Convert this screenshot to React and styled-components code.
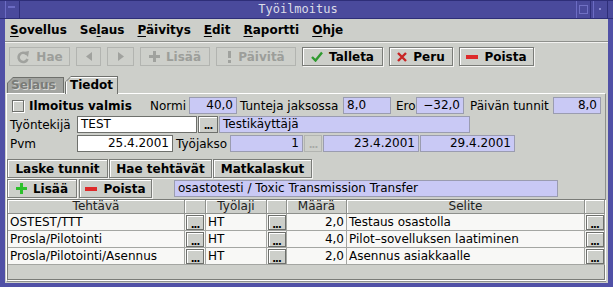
import React from 'react';
import styled, { createGlobalStyle } from 'styled-components';

const GlobalStyle = createGlobalStyle`
  html, body {
    margin: 0;
    padding: 0;
    background: #4c4ca0;
  }
  body {
    font-family: "DejaVu Sans", "Liberation Sans", sans-serif;
    font-size: 12px;
    color: #000;
  }
`;

const GRAY = '#cdcfca';
const LAVENDER = '#c9c9f5';

const Window = styled.div`
  width: 613px;
  height: 287px;
  box-sizing: border-box;
  background: #5050a6;
  display: flex;
  flex-direction: column;
  padding: 0 5px 4px 5px;
  overflow: hidden;
`;

const TitleBar = styled.div`
  height: 19px;
  margin: 0 -5px;
  box-sizing: border-box;
  background: #4a4a9c;
  border-top: 1px solid #2e2e78;
  border-bottom: 1px solid #2e2e78;
  display: flex;
  align-items: stretch;
  position: relative;
`;

const TitleText = styled.div`
  flex: 1;
  text-align: center;
  font-family: "DejaVu Sans Mono", "Liberation Mono", monospace;
  font-size: 12px;
  line-height: 17px;
  color: #dcdce8;
`;

const TitleBox = styled.div`
  width: 15px;
  margin-left: ${(p) => p.ml || 0}px;
  box-sizing: border-box;
  border-left: 1px solid #6c6cc4;
  border-right: 1px solid #2e2e78;
  display: flex;
  align-items: center;
  justify-content: center;
`;

const Body = styled.div`
  flex: 1;
  background: ${GRAY};
  display: flex;
  flex-direction: column;
  min-height: 0;
`;

const MenuBar = styled.div`
  height: 22px;
  display: flex;
  align-items: center;
  gap: 13px;
  padding-left: 5px;
  border-bottom: 1px solid #8e908c;
  box-shadow: 0 1px 0 #f2f2f0;
  font-weight: bold;
`;

const MenuItem = styled.span`
  line-height: 22px;
  u { text-decoration: underline; text-underline-offset: 2px; }
`;

const ToolBar = styled.div`
  display: flex;
  gap: 6px;
  padding: 5px 0 10px 4px;
`;

const Button = styled.div`
  width: ${(p) => p.w}px;
  height: ${(p) => p.h || 19}px;
  box-sizing: border-box;
  display: flex;
  align-items: center;
  justify-content: center;
  gap: 6px;
  font-weight: bold;
  font-size: 12px;
  background: ${GRAY};
  color: ${(p) => (p.disabled ? '#9c9e9a' : '#000')};
  border: 1px solid ${(p) => (p.disabled ? '#b2b4b0' : '#7a7c78')};
  box-shadow: ${(p) =>
    p.disabled ? 'none' : 'inset 1px 1px 0 #ffffff, 1px 1px 0 #f4f4f2'};
  white-space: nowrap;
`;

const TabRow = styled.div`
  display: flex;
  align-items: flex-end;
  height: 17px;
  padding-left: 2px;
  position: relative;
  z-index: 1;
`;

const TabOuter = styled.div`
  width: ${(p) => p.w}px;
  height: ${(p) => (p.selected ? 18 : 16)}px;
  margin-left: ${(p) => p.ml || 0}px;
  margin-bottom: ${(p) => (p.selected ? -1 : 0)}px;
  background: #6e706c;
  clip-path: polygon(6px 0, 100% 0, 100% 100%, 0 100%, 0 6px);
  padding: 1px 1px 0 1px;
  box-sizing: border-box;
`;

const TabInner = styled.div`
  height: 100%;
  background: ${(p) => (p.selected ? GRAY : '#a3a5a1')};
  clip-path: polygon(5px 0, 100% 0, 100% 100%, 0 100%, 0 5px);
  box-shadow: ${(p) => (p.selected ? 'inset 1px 1px 0 #fff' : 'none')};
  font-weight: bold;
  line-height: ${(p) => (p.selected ? 17 : 15)}px;
  padding-left: ${(p) => (p.selected ? 4 : 3)}px;
  color: ${(p) => (p.selected ? '#000' : '#7a7c78')};
  text-shadow: ${(p) => (p.selected ? 'none' : '1px 1px 0 #d8d8d6')};
`;

const Panel = styled.div`
  flex: 1;
  margin: 0 2px 1px 1px;
  border-top: 1px solid #fff;
  border-left: 1px solid #fff;
  border-right: 1px solid #8e908c;
  border-bottom: 1px solid #8e908c;
  padding-top: 3px;
  display: flex;
  flex-direction: column;
  min-height: 0;
`;

const FormRow = styled.div`
  display: flex;
  align-items: center;
  height: 17px;
  padding-left: 3px;
  margin-top: ${(p) => p.mt || 0}px;
  gap: ${(p) => p.gap || 0}px;
`;

const Label = styled.span`
  width: ${(p) => p.w}px;
  margin-left: ${(p) => p.ml || 0}px;
  flex-shrink: 0;
  white-space: nowrap;
  font-weight: ${(p) => (p.bold ? 'bold' : 'normal')};
`;

const Field = styled.div`
  width: ${(p) => p.w}px;
  height: 17px;
  flex-shrink: 0;
  box-sizing: border-box;
  margin-left: ${(p) => p.ml || 0}px;
  background: ${(p) => (p.white ? '#ffffff' : LAVENDER)};
  border: 1px solid ${(p) => (p.white ? '#6e706c' : '#9a9cb0')};
  padding: 0 3px;
  line-height: 15px;
  text-align: ${(p) => (p.right ? 'right' : 'left')};
  white-space: nowrap;
  overflow: hidden;
`;

const Check = styled.div`
  width: 12px;
  height: 12px;
  margin-left: 2px;
  box-sizing: border-box;
  border: 1px solid #6e706c;
  box-shadow: inset 1px 1px 0 #fff, 1px 1px 0 #fff;
  flex-shrink: 0;
`;

const DotButton = styled.div`
  width: ${(p) => p.w || 18}px;
  height: ${(p) => p.h || 16}px;
  flex-shrink: 0;
  box-sizing: border-box;
  border: 1px solid ${(p) => (p.disabled ? '#b2b4b0' : '#6e706c')};
  box-shadow: ${(p) => (p.disabled ? 'none' : 'inset 1px 1px 0 #fff')};
  background: ${GRAY};
  color: ${(p) => (p.disabled ? '#a8aaa6' : '#000')};
  font-weight: bold;
  font-size: 10px;
  letter-spacing: -1px;
  text-align: center;
  line-height: 17px;
`;

const ButtonRow = styled.div`
  display: flex;
  align-items: center;
  gap: ${(p) => p.gap || 1}px;
  margin-top: ${(p) => p.mt || 0}px;
`;

const Table = styled.div`
  flex: 1;
  width: 598px;
  margin-top: 1px;
  margin-bottom: 1px;
  box-sizing: border-box;
  border: 1px solid #7a7c78;
  box-shadow: 1px 1px 0 #fff;
  display: grid;
  grid-template-columns: 177px 21px 61px 20px 60px 238px 20px;
  grid-auto-rows: 17px;
  grid-template-rows: 14px;
  align-content: start;
`;

const HeadCell = styled.div`
  box-sizing: border-box;
  border-right: 1px solid #8e908c;
  border-bottom: 1px solid #8e908c;
  box-shadow: inset 1px 1px 0 #fff;
  text-align: center;
  line-height: 13px;
  color: #222;
  white-space: nowrap;
  overflow: hidden;
`;

const Cell = styled.div`
  box-sizing: border-box;
  background: #f8f8f6;
  border-right: 1px solid #a4a6a2;
  border-bottom: 1px solid #a4a6a2;
  padding: 0 2px;
  line-height: 16px;
  text-align: ${(p) => (p.right ? 'right' : 'left')};
  white-space: nowrap;
  overflow: hidden;
  display: flex;
  align-items: center;
  justify-content: ${(p) => (p.center ? 'center' : p.right ? 'flex-end' : 'flex-start')};
`;

const RefreshIcon = ({ color }) => (
  <svg width="14" height="14" viewBox="0 0 14 14">
    <path d="M10.5 4.2 A4.6 4.6 0 1 0 11.5 9" fill="none" stroke={color} strokeWidth="2.6" />
    <polygon points="7.5,2 13,1 12,7" fill={color} />
  </svg>
);

const Arrow = ({ dir, color }) => (
  <svg width="6" height="9" viewBox="0 0 6 9">
    {dir === 'left'
      ? <polygon points="6,0 6,9 0,4.5" fill={color} />
      : <polygon points="0,0 0,9 6,4.5" fill={color} />}
  </svg>
);

const PlusIcon = ({ color }) => (
  <svg width="11" height="11" viewBox="0 0 11 11">
    <rect x="4" y="0" width="3" height="11" fill={color} />
    <rect x="0" y="4" width="11" height="3" fill={color} />
  </svg>
);

const BangIcon = ({ color }) => (
  <svg width="5" height="12" viewBox="0 0 5 12">
    <rect x="1" y="0" width="3" height="7" fill={color} />
    <rect x="1" y="9" width="3" height="3" fill={color} />
  </svg>
);

const CheckIcon = () => (
  <svg width="12" height="11" viewBox="0 0 12 11">
    <path d="M1 6 L4.5 9.5 L11 1.5" fill="none" stroke="#2f9a2f" strokeWidth="2.4" />
  </svg>
);

const CrossIcon = () => (
  <svg width="10" height="10" viewBox="0 0 10 10">
    <path d="M1 1 L9 9 M9 1 L1 9" stroke="#c82424" strokeWidth="2.4" />
  </svg>
);

const MinusIcon = () => (
  <svg width="12" height="4" viewBox="0 0 12 4">
    <rect x="0" y="0" width="12" height="4" fill="#de2a2a" />
  </svg>
);

const rows = [
  { task: 'OSTEST/TTT', type: 'HT', amount: '2,0', desc: 'Testaus osastolla' },
  { task: 'Prosla/Pilotointi', type: 'HT', amount: '4,0', desc: 'Pilot\u2013sovelluksen laatiminen' },
  { task: 'Prosla/Pilotointi/Asennus', type: 'HT', amount: '2,0', desc: 'Asennus asiakkaalle' },
];

const DIS = '#a0a29e';

export default function App() {
  return (
    <>
      <GlobalStyle />
      <Window>
        <TitleBar>
          <TitleBox ml={5}>
            <svg width="9" height="9" viewBox="0 0 9 9">
              <rect x="0" y="1" width="7" height="2" fill="#6c6cc4" />
            </svg>
          </TitleBox>
          <TitleText>Työilmoitus</TitleText>
          <TitleBox>
            <svg width="9" height="9" viewBox="0 0 9 9">
              <rect x="0.5" y="0.5" width="8" height="8" fill="none" stroke="#7070c4" />
            </svg>
          </TitleBox>
          <TitleBox ml={2}>
            <svg width="3" height="3" viewBox="0 0 3 3">
              <rect x="0" y="0" width="2" height="2" fill="#8a8ad0" />
            </svg>
          </TitleBox>
          <div style={{ width: 5 }} />
        </TitleBar>
        <Body>
          <MenuBar>
            <MenuItem><u>S</u>ovellus</MenuItem>
            <MenuItem>Se<u>l</u>aus</MenuItem>
            <MenuItem><u>P</u>äivitys</MenuItem>
            <MenuItem><u>E</u>dit</MenuItem>
            <MenuItem><u>R</u>aportti</MenuItem>
            <MenuItem><u>O</u>hje</MenuItem>
          </MenuBar>
          <ToolBar>
            <Button w={61} disabled><RefreshIcon color={DIS} />Hae</Button>
            <Button w={25} disabled><Arrow dir="left" color={DIS} /></Button>
            <Button w={27} disabled><Arrow dir="right" color={DIS} /></Button>
            <Button w={70} disabled><PlusIcon color={DIS} />Lisää</Button>
            <Button w={80} disabled><BangIcon color={DIS} />Päivitä</Button>
            <Button w={81}><CheckIcon />Talleta</Button>
            <Button w={64}><CrossIcon />Peru</Button>
            <Button w={75}><MinusIcon />Poista</Button>
          </ToolBar>
          <TabRow>
            <TabOuter w={57}>
              <TabInner>Selaus</TabInner>
            </TabOuter>
            <TabOuter w={53} ml={1} selected>
              <TabInner selected>Tiedot</TabInner>
            </TabOuter>
          </TabRow>
          <Panel>
            <FormRow>
              <Check />
              <Label w={121} ml={5} bold>Ilmoitus valmis</Label>
              <Label w={39}>Normi</Label>
              <Field w={48} right>40,0</Field>
              <Label w={103} ml={3}>Tunteja jaksossa</Label>
              <Field w={48}>8,0</Field>
              <Label w={20} ml={5}>Ero</Label>
              <Field w={48} right>−32,0</Field>
              <Label w={83} ml={6}>Päivän tunnit</Label>
              <Field w={48} right>8,0</Field>
            </FormRow>
            <FormRow mt={2} gap={1}>
              <Label w={66}>Työntekijä</Label>
              <Field w={120} white>TEST</Field>
              <DotButton w={20} h={17}>...</DotButton>
              <Field w={251}>Testikäyttäjä</Field>
            </FormRow>
            <FormRow mt={2}>
              <Label w={67}>Pvm</Label>
              <Field w={96} white right>25.4.2001</Field>
              <Label w={54} ml={3}>Työjakso</Label>
              <Field w={73} right>1</Field>
              <DotButton w={18} h={17} disabled style={{ marginLeft: 1 }}>...</DotButton>
              <Field w={96} ml={1} right>23.4.2001</Field>
              <Field w={95} ml={1} right>29.4.2001</Field>
            </FormRow>
            <ButtonRow mt={7}>
              <Button w={101}>Laske tunnit</Button>
              <Button w={103}>Hae tehtävät</Button>
              <Button w={99}>Matkalaskut</Button>
            </ButtonRow>
            <ButtonRow mt={1} gap={2}>
              <Button w={70}><PlusIcon color="#2cc02c" />Lisää</Button>
              <Button w={73}><MinusIcon />Poista</Button>
              <Field w={384} ml={20}>osastotesti / Toxic Transmission Transfer</Field>
            </ButtonRow>
            <Table>
              <HeadCell>Tehtävä</HeadCell>
              <HeadCell />
              <HeadCell>Työlaji</HeadCell>
              <HeadCell />
              <HeadCell>Määrä</HeadCell>
              <HeadCell>Selite</HeadCell>
              <HeadCell />
              {rows.map((r) => (
                <React.Fragment key={r.task}>
                  <Cell>{r.task}</Cell>
                  <Cell center><DotButton h={15}>...</DotButton></Cell>
                  <Cell>{r.type}</Cell>
                  <Cell center><DotButton h={15}>...</DotButton></Cell>
                  <Cell right>{r.amount}</Cell>
                  <Cell>{r.desc}</Cell>
                  <Cell center><DotButton h={15}>...</DotButton></Cell>
                </React.Fragment>
              ))}
            </Table>
          </Panel>
        </Body>
      </Window>
    </>
  );
}
